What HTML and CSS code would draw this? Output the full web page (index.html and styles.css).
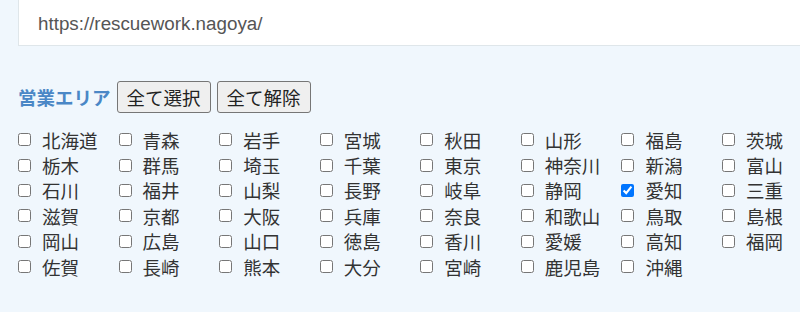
FILE: index.html
```html
<!DOCTYPE html>
<html lang="ja">
<head>
    <meta charset="UTF-8">
    <meta name="viewport" content="width=device-width, initial-scale=1.0">
    <title>営業エリア</title>
    <link rel="stylesheet" href="styles.css">
</head>
<body>
    <div class="page">
        <input type="text" class="url-field" value="https://rescuework.nagoya/">
        <div class="area-head">
            <span class="area-title">営業エリア</span>
            <button class="area-btn" onclick="checkAll(true)">全て選択</button>
            <button class="area-btn" onclick="checkAll(false)">全て解除</button>
        </div>
        <div class="pref-list" id="pref-list"></div>
    </div>
    <script>
        const prefs = ['北海道','青森','岩手','宮城','秋田','山形','福島','茨城',
            '栃木','群馬','埼玉','千葉','東京','神奈川','新潟','富山',
            '石川','福井','山梨','長野','岐阜','静岡','愛知','三重',
            '滋賀','京都','大阪','兵庫','奈良','和歌山','鳥取','島根',
            '岡山','広島','山口','徳島','香川','愛媛','高知','福岡',
            '佐賀','長崎','熊本','大分','宮崎','鹿児島','沖縄'];
        let list = document.getElementById('pref-list');
        prefs.forEach(name => {
            let label = document.createElement('label');
            label.className = 'pref';
            let box = document.createElement('input');
            box.type = 'checkbox';
            box.name = 'area';
            box.value = name;
            if (name === '愛知') box.checked = true;
            label.appendChild(box);
            label.appendChild(document.createTextNode(name));
            list.appendChild(label);
        });

        function checkAll(state) {
            document.querySelectorAll('.pref input').forEach(box => {
                box.checked = state;
            });
        }
    </script>
</body>
</html>
```

FILE: styles.css
```css
html {
    overflow: hidden;
}
body {
    margin: 0;
    background-color: #f0f7fd;
    font-family: "Noto Sans CJK JP", sans-serif;
    color: #333;
}
.page {
    padding: 0 18px;
}
.url-field {
    display: block;
    box-sizing: border-box;
    width: 820px;
    height: 46px;
    margin: 0;
    padding: 2px 19px 0;
    border: 1px solid #dfe6ea;
    border-top: none;
    background: #fff;
    font-family: "Liberation Sans", Arial, sans-serif;
    font-size: 18.8px;
    color: #555;
    outline: none;
}
.area-head {
    display: flex;
    align-items: center;
    gap: 6px;
    margin-top: 35px;
}
.area-title {
    font-size: 18.5px;
    font-weight: bold;
    color: #4a87c6;
}
.area-btn {
    height: 32px;
    padding: 0 9px;
    border: 1px solid #767676;
    border-radius: 3px;
    background-color: #efefef;
    font-family: "Noto Sans CJK JP", sans-serif;
    font-size: 18.5px;
    color: #222;
    cursor: pointer;
}
.area-btn:hover {
    background-color: #e5e5e5;
}
.pref-list {
    display: grid;
    grid-template-columns: repeat(8, 100.57px);
    margin-top: 14px;
}
.pref {
    display: flex;
    align-items: center;
    height: 25.4px;
    font-size: 18.5px;
    white-space: nowrap;
    cursor: pointer;
}
.pref input {
    width: 13px;
    height: 13px;
    margin: 0 11px 0 0;
}
```
